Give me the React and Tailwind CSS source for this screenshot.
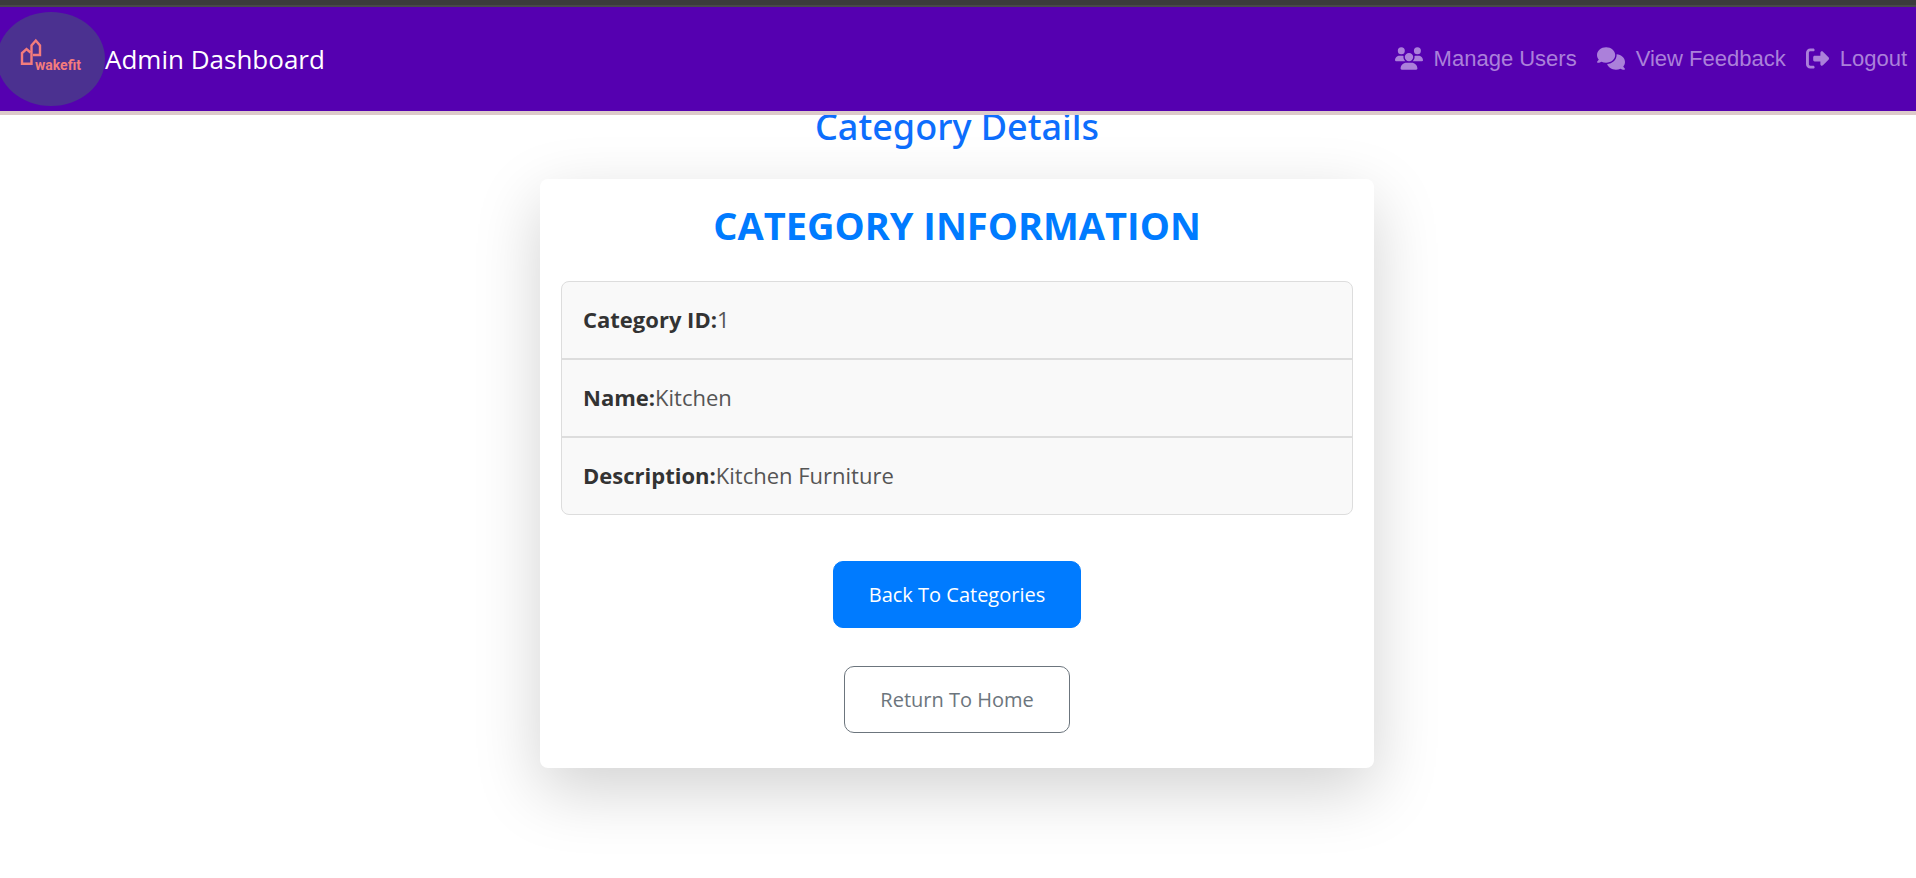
import React from "react";
import { FaUsers, FaComments, FaRightFromBracket } from "react-icons/fa6";

const links = [
  { label: "Manage Users", Icon: FaUsers, size: "h-[23px] w-7" },
  { label: "View Feedback", Icon: FaComments, size: "h-[23px] w-7" },
  { label: "Logout", Icon: FaRightFromBracket, size: "h-[23px] w-[23px]" },
];

const details = [
  ["Category ID:", "1"],
  ["Name:", "Kitchen"],
  ["Description:", "Kitchen Furniture"],
];

function Logo() {
  return (
    <svg viewBox="0 0 108 94" className="-ml-[3px] h-[94px] w-[108px] shrink-0" role="img" aria-label="wakefit">
      <ellipse cx="54" cy="47" rx="54" ry="47" fill="#4b3190" />
      <g fill="none" stroke="#f47c7c" strokeWidth="2.4">
        <path d="M34.5 51.8H25V41L29.5 37L33.5 40.5" />
        <path d="M34.5 53V33.5L38.8 28.5L43 33.5V43H36" />
      </g>
      <text x="38" y="58" fontSize="14" fontWeight="700" fill="#f47c7c" className="font-['Roboto',sans-serif]">wakefit</text>
    </svg>
  );
}

export default function App() {
  return (
    <div className="min-h-screen overflow-x-hidden bg-white font-['Open_Sans',sans-serif]">
      <header className="sticky top-0 z-10 border-t-[5px] border-[#3b3b3b]">
        <div className="flex items-center justify-between border-t-2 border-b-4 border-t-[#484848] border-b-[#dccaca] bg-[#5500b0] py-[5px] pr-[9px]">
          <a href="#home" className="flex items-center text-[26px] text-white">
            <Logo />
            Admin Dashboard
          </a>
          <nav className="flex items-center gap-5 pb-0.5 font-['Liberation_Sans',sans-serif] text-[22px] text-[#ab80da]">
            {links.map(({ label, Icon, size }) => (
              <a key={label} href="#nav" className="flex items-center gap-[11px]">
                <Icon className={size} />
                {label}
              </a>
            ))}
          </nav>
        </div>
      </header>
      <main className="-mt-2 flex flex-col items-center pr-0.5 pb-20">
        <h1 className="font-['Noto_Sans',sans-serif] text-[36px] leading-[40px] font-medium text-[#0d6efd]">Category Details</h1>
        <section className="mt-8 flex w-full max-w-[834px] flex-col items-center rounded-lg bg-white px-[21px] pt-[22px] pb-[35px] shadow-[0_22px_66px_rgba(0,0,0,0.18)]">
          <h2 className="text-[38px] leading-[48px] font-bold text-[#007bff]">CATEGORY INFORMATION</h2>
          <ul className="mt-8 w-full divide-y-2 divide-[#dddddd] rounded-lg border border-[#dddddd] bg-[#f9f9f9] text-[22px] leading-[32px]">
            {details.map(([label, value]) => (
              <li key={label} className="px-[21px] pt-[21px] pb-[23px] text-[#555555]">
                <strong className="font-bold text-[#333333]">{label}</strong>
                {value}
              </li>
            ))}
          </ul>
          <button type="button" className="mt-[46px] rounded-[10px] border border-[#007bff] bg-[#007bff] px-[35px] py-4 text-[20px] leading-[33px] text-white">
            Back To Categories
          </button>
          <button type="button" className="mt-[38px] rounded-[10px] border border-[#6c757d] px-[35px] py-4 text-[20px] leading-[33px] text-[#6c757d]">
            Return To Home
          </button>
        </section>
      </main>
    </div>
  );
}
